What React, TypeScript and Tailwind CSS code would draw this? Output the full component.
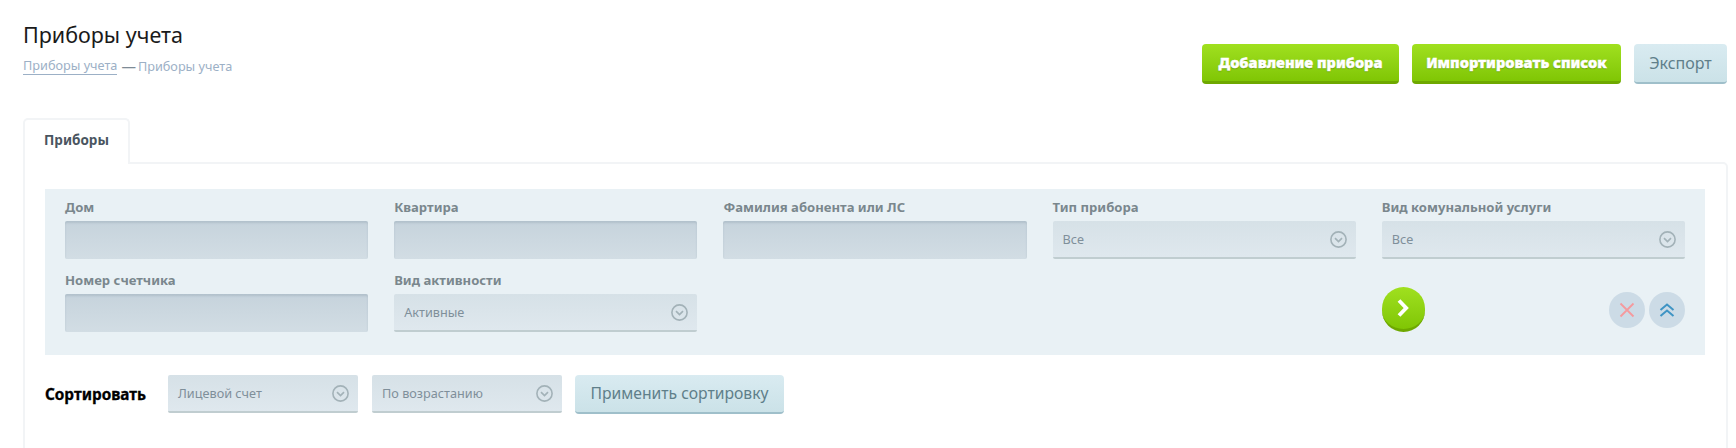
function ChevronCircle() {
  return (
    <svg width="17" height="17" viewBox="0 0 17 17" fill="none" className="shrink-0">
      <circle cx="8.5" cy="8.5" r="7.6" stroke="#a3b2b8" strokeWidth="1.6" />
      <path d="M5 7.2 8.5 10.6 12 7.2" stroke="#a3b2b8" strokeWidth="1.7" />
    </svg>
  );
}

function Label({ text }: { text: string }) {
  return <div className="h-[17px] text-[13.1px] leading-[17px] font-bold text-[#7a878d] whitespace-nowrap">{text}</div>;
}

function TextField({ label }: { label: string }) {
  return (
    <div className="flex flex-col gap-[5px]">
      <Label text={label} />
      <div className="h-[38px] rounded-[2px] bg-gradient-to-b from-[#c6d3dc] to-[#d2dde4] shadow-[inset_0_2px_2px_rgba(120,140,155,0.25)]" />
    </div>
  );
}

function SelectBox({ value, className }: { value: string; className: string }) {
  return (
    <div className={`h-[38px] flex items-center justify-between pl-[10px] pr-[9px] rounded-[2px] border-b-2 border-[#c0cdd0] bg-gradient-to-b from-[#d6e1e7] to-[#dfe8ee] ${className}`}>
      <span className="text-[12.7px] pt-[1px] text-[#7f8f9a] whitespace-nowrap">{value}</span>
      <ChevronCircle />
    </div>
  );
}

function GreenButton({ children, className }: { children: string; className: string }) {
  return (
    <button className={`h-[40px] rounded-[4px] border-b-[3px] border-[#6ea800] bg-gradient-to-b from-[#a0e01e] to-[#80c604] text-[14.6px] font-black text-white whitespace-nowrap [-webkit-text-stroke:0.4px_white] [text-shadow:0_1px_1px_rgba(70,110,0,0.6)] ${className}`}>
      {children}
    </button>
  );
}

function LightButton({ children, className }: { children: string; className: string }) {
  return (
    <button className={`rounded-[4px] border-b-2 border-[#9fbfca] bg-gradient-to-b from-[#d9ebf1] to-[#cbe2e8] text-[#5f7f8a] whitespace-nowrap ${className}`}>
      {children}
    </button>
  );
}

function SelectField({ label, value }: { label: string; value: string }) {
  return (
    <div className="flex flex-col gap-[5px]">
      <Label text={label} />
      <SelectBox value={value} className="w-full" />
    </div>
  );
}

export default function App() {
  return (
    <div className="h-[448px] overflow-hidden bg-white pl-[23px] pr-[8px] font-['Noto_Sans',sans-serif]">
      {/* Header */}
      <div className="flex justify-between items-start pr-[1px]">
        <div className="pt-[20px]">
          <h1 className="text-[21.5px] leading-[30px] text-[#1a1a1a]">Приборы учета</h1>
          <div className="mt-[6px] flex items-center text-[12.7px] leading-[18px] text-[#9cb0c6]">
            <span className="border-b border-[#9cb0c6]">Приборы учета</span>
            <span className="ml-[4px] mr-[2px] text-[14.5px] leading-[18px] text-[#7e8b96]">—</span>
            <span>Приборы учета</span>
          </div>
        </div>
        <div className="flex gap-[13px] pt-[44px]">
          <GreenButton className="w-[197px]">Добавление прибора</GreenButton>
          <GreenButton className="w-[209px]">Импортировать список</GreenButton>
          <LightButton className="w-[93px] h-[40px] text-[16px]">Экспорт</LightButton>
        </div>
      </div>

      {/* Tab */}
      <div className="mt-[34px] w-[107px] h-[46px] -mb-[2px] pb-[3px] relative z-10 bg-white rounded-t-[5px] border-2 border-b-0 border-[#f2f4f6] flex items-center justify-center text-[13.5px] font-bold text-[#4a5560]">
        Приборы
      </div>

      {/* Panel */}
      <div className="h-[300px] border-2 border-[#f2f4f6] rounded-tr-[5px] pt-[25px] pl-[20px] pr-[21px]">
        <div className="h-[166px] bg-[#e9f1f5] pt-[10px] px-[20px]">
          <div className="grid grid-cols-5 gap-x-[26px] gap-y-[13px]">
            <TextField label="Дом" />
            <TextField label="Квартира" />
            <TextField label="Фамилия абонента или ЛС" />
            <SelectField label="Тип прибора" value="Все" />
            <SelectField label="Вид комунальной услуги" value="Все" />
            <TextField label="Номер счетчика" />
            <SelectField label="Вид активности" value="Активные" />
            <div className="col-start-5 flex items-end justify-between">
              <button className="w-[43px] h-[45px] rounded-full border-b-[3px] border-[#6ea800] bg-gradient-to-b from-[#a0e01e] to-[#80c604] flex items-center justify-center">
                <svg width="14" height="20" viewBox="0 0 14 20" fill="none">
                  <path d="M3 2.5 10.2 10 3 17.5" stroke="white" strokeWidth="3.8" />
                </svg>
              </button>
              <div className="flex gap-[4px] mb-[4px]">
                <button className="w-[36px] h-[36px] rounded-full bg-[#ccdbe6] flex items-center justify-center">
                  <svg width="16" height="16" viewBox="0 0 16 16" fill="none">
                    <path d="M1.5 1.5 14.5 14.5M14.5 1.5 1.5 14.5" stroke="#f49a9e" strokeWidth="1.8" />
                  </svg>
                </button>
                <button className="w-[36px] h-[36px] rounded-full bg-[#ccdbe6] flex items-center justify-center">
                  <svg width="16" height="14" viewBox="0 0 16 14" fill="none">
                    <path d="M1.5 7 8 1.5 14.5 7M1.5 13 8 7.5 14.5 13" stroke="#3f94c4" strokeWidth="2" />
                  </svg>
                </button>
              </div>
            </div>
          </div>
        </div>

        {/* Sort row */}
        <div className="mt-[20px] flex items-start">
          <span className="w-[123px] pt-[9px] text-[15.3px] leading-[20px] font-bold text-black [-webkit-text-stroke:0.3px_black]">Сортировать</span>
          <SelectBox value="Лицевой счет" className="w-[190px]" />
          <SelectBox value="По возрастанию" className="w-[190px] ml-[14px]" />
          <LightButton className="w-[209px] h-[39px] ml-[13px] text-[15.7px]">Применить сортировку</LightButton>
        </div>
      </div>
    </div>
  );
}
